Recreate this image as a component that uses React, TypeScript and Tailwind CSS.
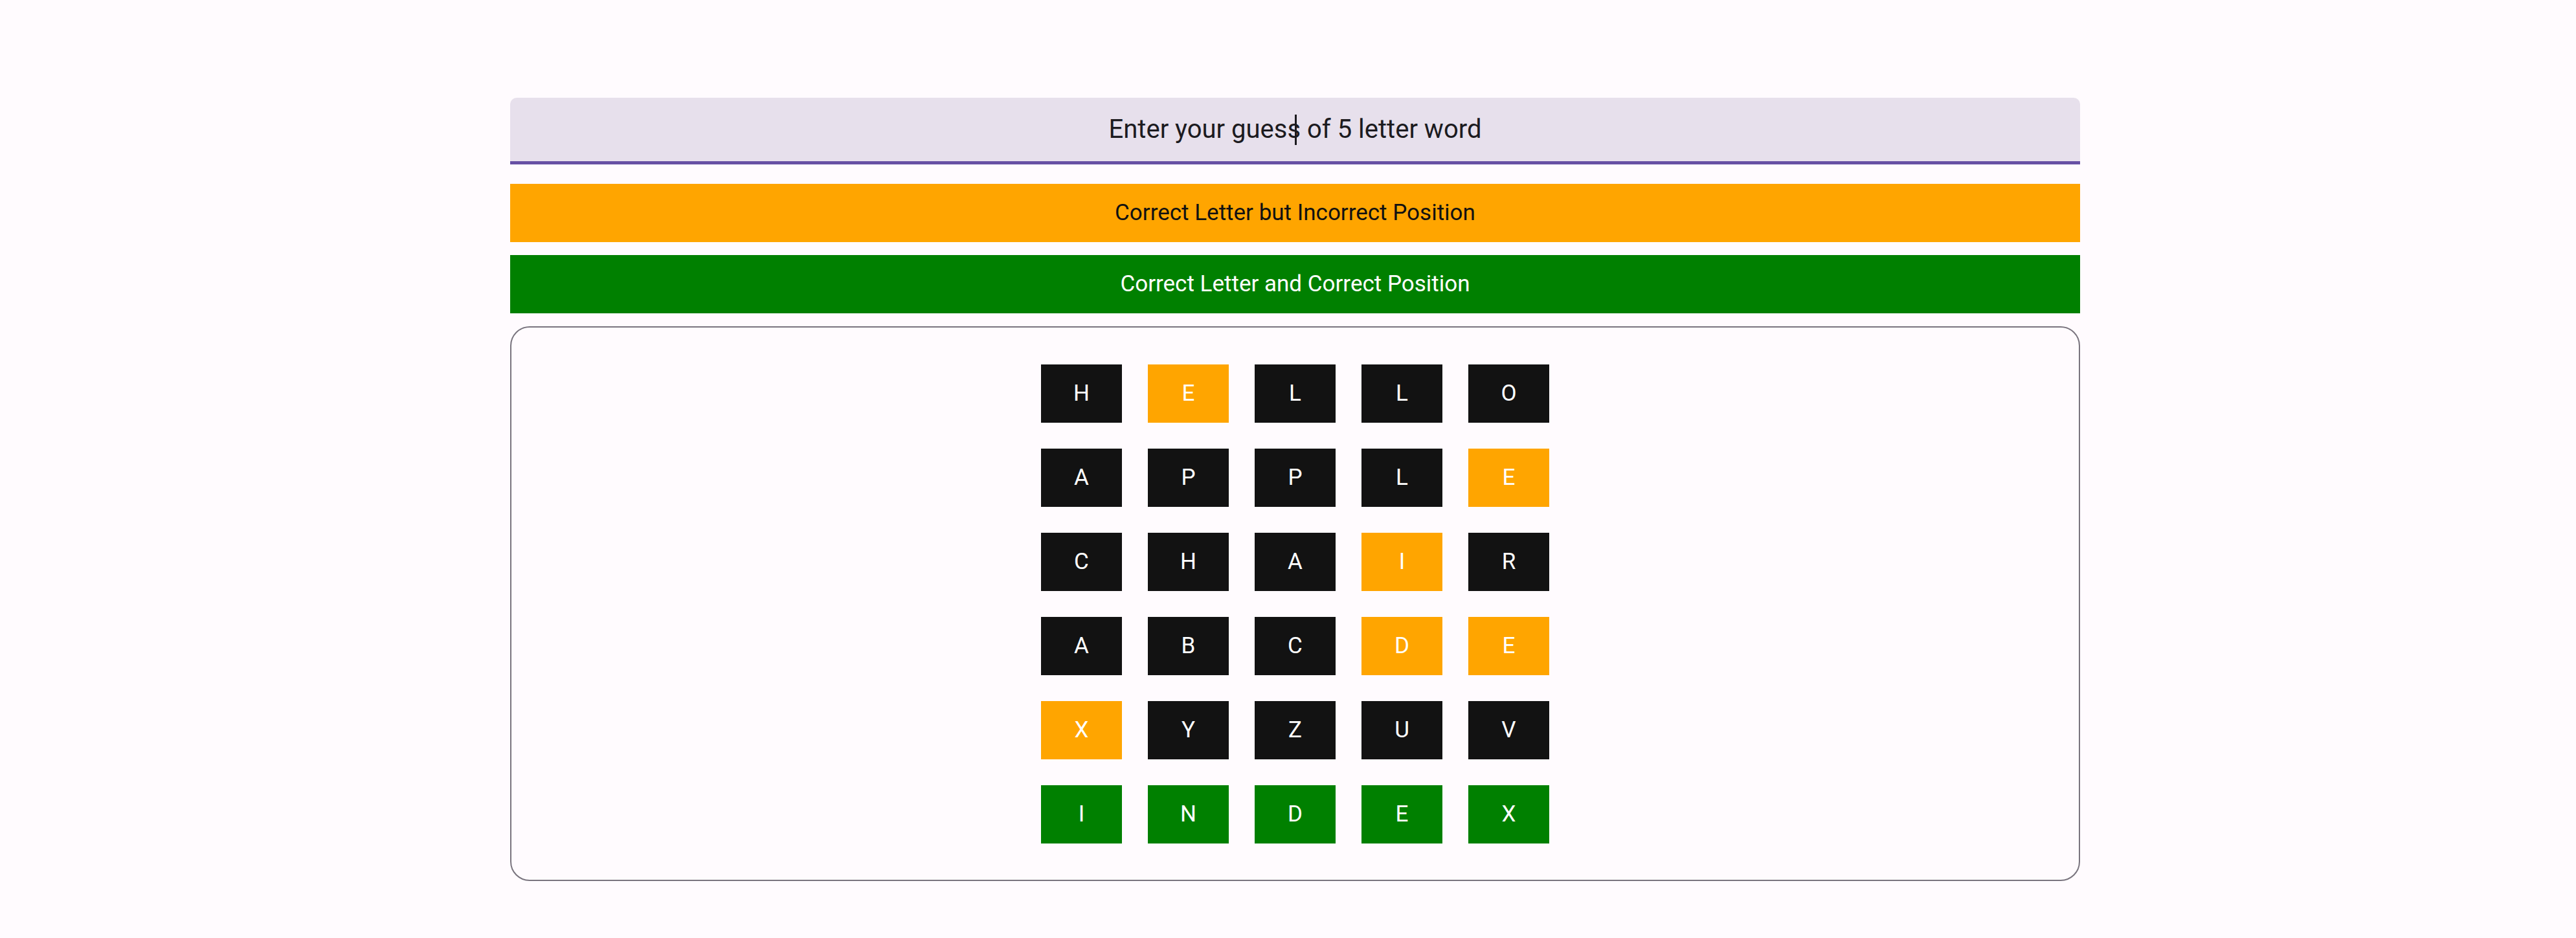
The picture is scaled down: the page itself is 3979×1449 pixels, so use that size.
import React from "react";

type Tile = { letter: string; state: "miss" | "near" | "hit" };

const rows: Tile[][] = [
  [
    { letter: "H", state: "miss" },
    { letter: "E", state: "near" },
    { letter: "L", state: "miss" },
    { letter: "L", state: "miss" },
    { letter: "O", state: "miss" },
  ],
  [
    { letter: "A", state: "miss" },
    { letter: "P", state: "miss" },
    { letter: "P", state: "miss" },
    { letter: "L", state: "miss" },
    { letter: "E", state: "near" },
  ],
  [
    { letter: "C", state: "miss" },
    { letter: "H", state: "miss" },
    { letter: "A", state: "miss" },
    { letter: "I", state: "near" },
    { letter: "R", state: "miss" },
  ],
  [
    { letter: "A", state: "miss" },
    { letter: "B", state: "miss" },
    { letter: "C", state: "miss" },
    { letter: "D", state: "near" },
    { letter: "E", state: "near" },
  ],
  [
    { letter: "X", state: "near" },
    { letter: "Y", state: "miss" },
    { letter: "Z", state: "miss" },
    { letter: "U", state: "miss" },
    { letter: "V", state: "miss" },
  ],
  [
    { letter: "I", state: "hit" },
    { letter: "N", state: "hit" },
    { letter: "D", state: "hit" },
    { letter: "E", state: "hit" },
    { letter: "X", state: "hit" },
  ],
];

const tileColor = {
  miss: "bg-[#121212]",
  near: "bg-[#ffa500]",
  hit: "bg-[#008000]",
};

function LetterTile({ tile }: { tile: Tile }) {
  return (
    <div
      className={`flex h-[90px] w-[125px] items-center justify-center text-[35px] text-white ${tileColor[tile.state]}`}
    >
      {tile.letter}
    </div>
  );
}

export default function App() {
  return (
    <div className="min-h-[1449px] w-full bg-[#fffbfe] font-['Roboto',sans-serif]">
      <div className="ml-[788px] flex w-[2425px] flex-col pt-[151px]">
        {/* guess input */}
        <div className="relative flex h-[103px] items-center justify-center rounded-t-[10px] border-b-[5px] border-[#6750a4] bg-[#e7e0ec] text-[40px] text-[#1c1b1f]">
          <span>Enter your guess of 5 letter word</span>
          <span className="absolute left-[1212px] top-[26px] h-[47px] w-[3px] bg-[#1c1b1f]" />
        </div>

        <div className="mt-[30px] flex h-[90px] items-center justify-center bg-[#ffa500] text-[35px] text-[#111]">
          Correct Letter but Incorrect Position
        </div>
        <div className="mt-[20px] flex h-[90px] items-center justify-center bg-[#008000] text-[35px] text-white">
          Correct Letter and Correct Position
        </div>

        {/* board */}
        <div className="mt-[20px] flex h-[857px] flex-col items-center gap-[40px] rounded-[30px] border-[2.5px] border-[#79747e] pt-[57px]">
          {rows.map((row, i) => (
            <div key={i} className="flex gap-[40px]">
              {row.map((t, j) => (
                <LetterTile key={j} tile={t} />
              ))}
            </div>
          ))}
        </div>
      </div>
    </div>
  );
}
